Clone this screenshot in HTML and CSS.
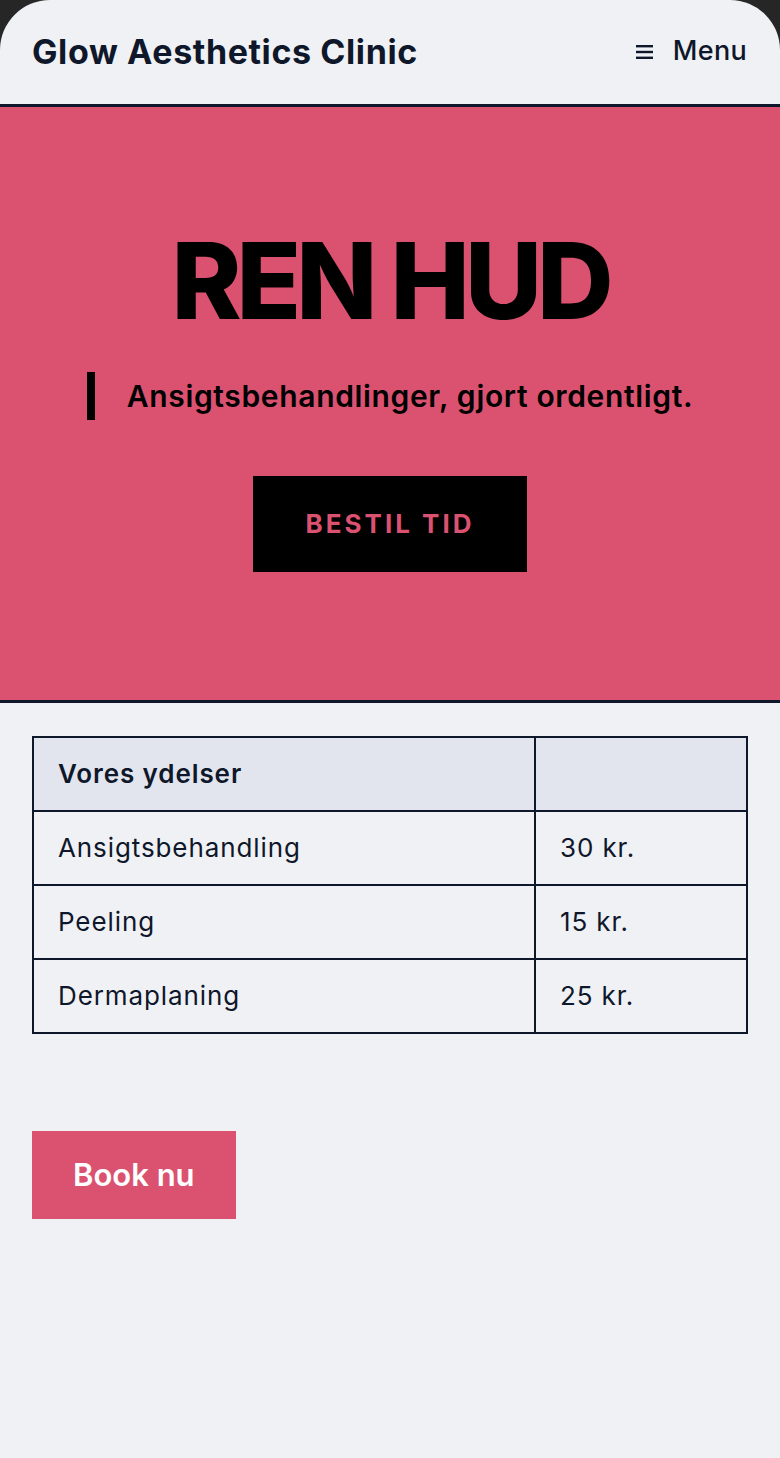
FILE: index.html
```html
<!DOCTYPE html>
<html lang="da">
<head>
<meta charset="utf-8">
<title>Glow Aesthetics Clinic</title>
<link rel="stylesheet" href="styles.css">
</head>
<body>
<div class="screen">
  <header class="topbar">
    <div class="brand">Glow Aesthetics Clinic</div>
    <button class="menu-btn" type="button">
      <svg class="burger" width="17" height="14" viewBox="0 0 17 14" aria-hidden="true">
        <rect x="0" y="0" width="17" height="2.4" fill="currentColor"/>
        <rect x="0" y="5.8" width="17" height="2.4" fill="currentColor"/>
        <rect x="0" y="11.6" width="17" height="2.4" fill="currentColor"/>
      </svg>
      <span>Menu</span>
    </button>
  </header>

  <section class="hero">
    <h1 class="hero-title">REN HUD</h1>
    <p class="hero-sub">Ansigtsbehandlinger, gjort ordentligt.</p>
    <a class="hero-cta" href="#">BESTIL TID</a>
  </section>

  <section class="services">
    <table class="price-table">
      <thead>
        <tr><th class="col-name">Vores ydelser</th><th class="col-price"></th></tr>
      </thead>
      <tbody>
        <tr><td>Ansigtsbehandling</td><td>30 kr.</td></tr>
        <tr><td>Peeling</td><td>15 kr.</td></tr>
        <tr><td>Dermaplaning</td><td>25 kr.</td></tr>
      </tbody>
    </table>
    <a class="book-btn" href="#">Book nu</a>
  </section>
</div>
</body>
</html>
```
FILE: styles.css
```css
* { box-sizing: border-box; }

html {
  background: #262626;
}

body {
  margin: 0;
  font-family: Inter, "Noto Sans", "Liberation Sans", sans-serif;
  color: #0f172a;
}

.screen {
  min-height: 100vh;
  background: #eff1f5;
  border-radius: 50px 50px 0 0;
  overflow: hidden;
}

.topbar {
  height: 107px;
  padding: 0 33px 3px 32px;
  border-bottom: 3px solid #0f172a;
  display: flex;
  align-items: center;
  justify-content: space-between;
}

.brand {
  font-size: 34px;
  font-weight: 700;
  letter-spacing: 0.6px;
  line-height: 1;
  margin-top: 2px;
}

.menu-btn {
  display: flex;
  align-items: center;
  gap: 20px;
  background: none;
  border: 0;
  padding: 0;
  font: inherit;
  font-size: 27px;
  font-weight: 500;
  letter-spacing: 0.3px;
  color: #0f172a;
  line-height: 1;
}

.burger { display: block; margin-top: 2px; }

.hero {
  background: #db5270;
  border-bottom: 3px solid #0f172a;
  padding: 121px 32px 128px;
  display: flex;
  flex-direction: column;
  align-items: center;
  color: #000;
}

.hero-title {
  margin: 0;
  font-size: 106px;
  font-weight: 800;
  line-height: 1;
  letter-spacing: -5px;
}

.hero-sub {
  margin: 38px 0 0;
  border-left: 8px solid #000;
  padding: 6px 0 6px 32px;
  font-size: 30px;
  font-weight: 600;
  line-height: 36px;
  letter-spacing: 0.65px;
}

.hero-cta {
  margin-top: 56px;
  background: #000;
  color: #db5270;
  text-decoration: none;
  font-size: 26px;
  font-weight: 700;
  letter-spacing: 3px;
  line-height: 32px;
  padding: 32px 53px;
}

.services {
  padding: 33px 32px 32px;
}

.price-table {
  width: 100%;
  border-collapse: collapse;
  border: 2px solid #0f172a;
  font-size: 26px;
  letter-spacing: 0.9px;
}

.price-table th,
.price-table td {
  border: 2px solid #0f172a;
  padding: 20px 24px;
  line-height: 32px;
  text-align: left;
}

.price-table thead th {
  background: #e2e5ee;
  font-weight: 600;
}

.col-name { width: 70.3%; }
.col-price { width: 29.7%; }

.book-btn {
  display: inline-block;
  margin-top: 97px;
  background: #db5270;
  color: #fff;
  text-decoration: none;
  font-size: 31px;
  font-weight: 600;
  line-height: 40px;
  padding: 24px 41px;
}
```
